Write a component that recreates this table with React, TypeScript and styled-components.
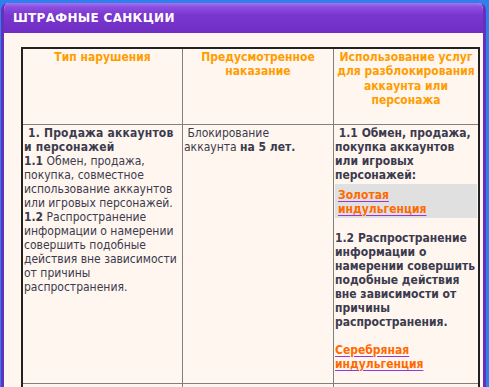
import React from "react";
import styled, { createGlobalStyle } from "styled-components";

const Global = createGlobalStyle`
  html, body { margin: 0; padding: 0; }
  body {
    background: #2f7fec;
    font-family: "DejaVu Sans Condensed", "DejaVu Sans", Verdana, sans-serif;
    overflow: hidden;
  }
`;

const Page = styled.div`
  padding: 3px 3px 0 1px;
  height: 387px;
  box-sizing: border-box;
`;

const Panel = styled.section`
  border: 3px solid #6431bd;
  border-top: none;
  border-bottom: none;
  border-radius: 7px 7px 0 0;
  background: #fff6f0;
  height: 100%;
  box-sizing: border-box;
  overflow: hidden;
`;

const Header = styled.header`
  height: 30px;
  margin: 0 -3px;
  border-radius: 7px 7px 0 0;
  background: linear-gradient(#a374ee 0px, #8c4fe0 4px, #7b36cf 12px, #6f2dc3 30px);
  display: flex;
  align-items: center;
  padding-left: 12px;
  color: #ffffff;
  font-family: "DejaVu Sans", sans-serif;
  font-weight: bold;
  font-size: 12px;
  letter-spacing: 0.3px;
`;

const Content = styled.div`
  padding: 14px 3px 0 17px;
`;

const Table = styled.table`
  width: 459px;
  table-layout: fixed;
  border-collapse: separate;
  border-spacing: 0;
  border: 2px solid #222;
  border-bottom: none;
  font-size: 12px;
  line-height: 14px;
  color: #3b3b4d;
`;

const HeadCell = styled.th<{ $w: number; $last?: boolean }>`
  width: ${(p) => p.$w}px;
  box-sizing: border-box;
  vertical-align: top;
  text-align: center;
  color: #ff9d00;
  font-weight: bold;
  padding: 1px 1px 16px;
  border-right: ${(p) => (p.$last ? "none" : "1px solid #808080")};
  border-bottom: 1px solid #808080;
  line-height: 14.4px;
`;

const Cell = styled.td<{ $last?: boolean; $pb?: number }>`
  vertical-align: top;
  padding: 1px 1px ${(p) => p.$pb ?? 12}px;
  border-right: ${(p) => (p.$last ? "none" : "1px solid #808080")};
  border-bottom: 1px solid #808080;
`;

const Bold = styled.span<{ $wide?: boolean }>`
  font-weight: bold;
  letter-spacing: ${(p) => (p.$wide ? "0.2px" : "0")};
`;

const Block = styled.div<{ $gap?: number }>`
  margin-top: ${(p) => p.$gap ?? 0}px;
  font-weight: bold;
`;

const LinkBox = styled.div`
  background: #e0e0e0;
  margin-top: 2px;
  padding: 4px 3px 2px;
`;

const Link = styled.a`
  color: #ff6a00;
  font-weight: bold;
  text-decoration: underline;
  text-decoration-color: #9b35d6;
  text-decoration-thickness: 1px;
  text-underline-offset: 2px;
  cursor: pointer;
`;

export default function App() {
  return (
    <>
      <Global />
      <Page>
        <Panel>
          <Header>ШТРАФНЫЕ САНКЦИИ</Header>
          <Content>
            <Table>
              <thead>
                <tr>
                  <HeadCell $w={160}>Тип нарушения</HeadCell>
                  <HeadCell $w={151}>Предусмотренное наказание</HeadCell>
                  <HeadCell $w={144} $last>
                    Использование услуг для разблокирования аккаунта или персонажа
                  </HeadCell>
                </tr>
              </thead>
              <tbody>
                <tr>
                  <Cell>
                    <Bold $wide>&nbsp;1. Продажа аккаунтов и персонажей</Bold>
                    <br />
                    <Bold>1.1</Bold> Обмен, продажа, покупка, совместное использование аккаунтов
                    или игровых персонажей.
                    <br />
                    <Bold>1.2</Bold> Распространение информации о намерении совершить подобные
                    действия вне зависимости от причины распространения.
                  </Cell>
                  <Cell>
                    &nbsp;Блокирование
                    <br />
                    аккаунта <Bold>на 5 лет.</Bold>
                  </Cell>
                  <Cell $last>
                    <Block>&nbsp;1.1 Обмен, продажа, покупка аккаунтов или игровых персонажей:</Block>
                    <LinkBox>
                      <Link>Золотая индульгенция</Link>
                    </LinkBox>
                    <Block $gap={13}>
                      1.2 Распространение информации о намерении совершить подобные действия вне
                      зависимости от причины распространения.
                    </Block>
                    <Block $gap={14}>
                      <Link>Серебряная индульгенция</Link>
                    </Block>
                  </Cell>
                </tr>
                <tr>
                  <Cell>&nbsp;</Cell>
                  <Cell>&nbsp;</Cell>
                  <Cell $last>&nbsp;</Cell>
                </tr>
              </tbody>
            </Table>
          </Content>
        </Panel>
      </Page>
    </>
  );
}
